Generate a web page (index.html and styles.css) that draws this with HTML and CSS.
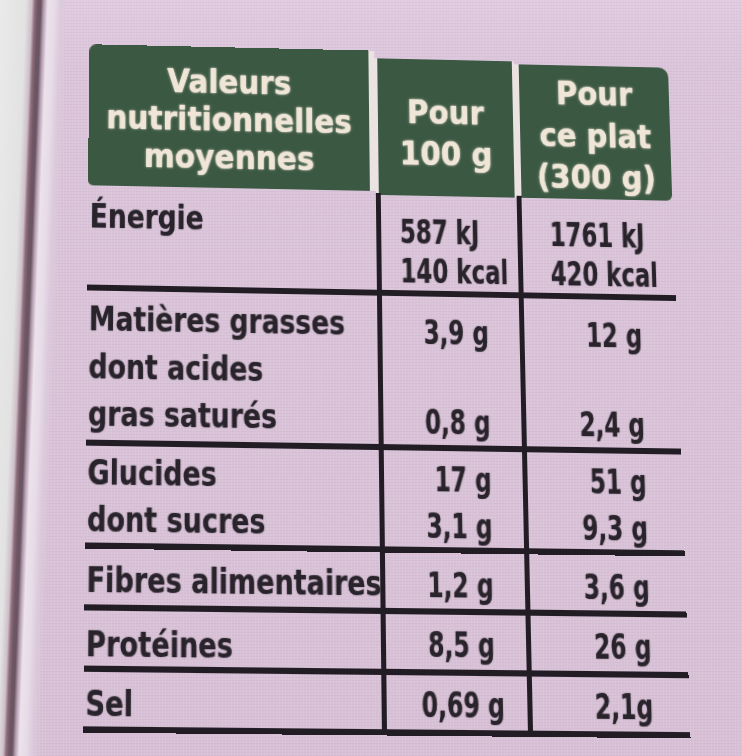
FILE: index.html
```html
<!DOCTYPE html>
<html lang="fr">
<head>
<meta charset="utf-8">
<title>Valeurs nutritionnelles</title>
<link rel="stylesheet" href="styles.css">
</head>
<body>
<div class="page">
  <div class="table">
    <div class="row head">
      <div class="h h1"><div class="htxt">Valeurs<br>nutritionnelles<br>moyennes</div></div>
      <div class="h h2"><div class="htxt">Pour<br>100 g</div></div>
      <div class="h h3"><div class="htxt">Pour<br>ce plat<br>(300 g)</div></div>
    </div>
    <div class="row energy">
      <div class="c name"><div class="lbl">Énergie</div></div>
      <div class="c v v2"><div class="val left">587 kJ<br>140 kcal</div></div>
      <div class="c v v3"><div class="val left">1761 kJ<br>420 kcal</div></div>
    </div>
    <div class="row fat">
      <div class="c name"><div class="lbl">Matières grasses<br>dont acides<br>gras saturés</div></div>
      <div class="c v v2"><div class="val">3,9 g<br><br>0,8 g</div></div>
      <div class="c v v3"><div class="val">12 g<br><br>2,4 g</div></div>
    </div>
    <div class="row carb">
      <div class="c name"><div class="lbl">Glucides<br>dont sucres</div></div>
      <div class="c v v2"><div class="val">17 g<br>3,1 g</div></div>
      <div class="c v v3"><div class="val">51 g<br>9,3 g</div></div>
    </div>
    <div class="row fib">
      <div class="c name"><div class="lbl">Fibres alimentaires</div></div>
      <div class="c v v2"><div class="val">1,2 g</div></div>
      <div class="c v v3"><div class="val">3,6 g</div></div>
    </div>
    <div class="row prot">
      <div class="c name"><div class="lbl">Protéines</div></div>
      <div class="c v v2"><div class="val">8,5 g</div></div>
      <div class="c v v3"><div class="val">26 g</div></div>
    </div>
    <div class="row salt">
      <div class="c name"><div class="lbl">Sel</div></div>
      <div class="c v v2"><div class="val">0,69 g</div></div>
      <div class="c v v3"><div class="val">2,1g</div></div>
    </div>
  </div>
</div>
</body>
</html>
```
FILE: styles.css
```css
* { box-sizing: border-box; }

html, body {
  margin: 0;
  padding: 0;
}

body {
  font-family: "DejaVu Sans", "Liberation Sans", sans-serif;
  font-weight: bold;
  color: #29242b;
}

.page {
  height: 756px;
  overflow: hidden;
  padding: 42px 0 0 88px;
  background:
    linear-gradient(92.2deg,
      #ebeaea 0,
      #e3e2e2 26px,
      #cdbfc8 32px,
      #8e6c7a 35px,
      #6e5664 38px,
      #6a5562 41px,
      #b49db0 44px,
      #ece2ec 48px,
      #e6dbe6 55px,
      #dccadc 61px,
      rgba(218, 195, 216, 0) 68px),
    repeating-linear-gradient(90deg, rgba(255, 255, 255, 0.07) 0 1px, rgba(255, 255, 255, 0) 1px 3px),
    repeating-linear-gradient(0deg, rgba(120, 80, 120, 0.05) 0 1px, rgba(120, 80, 120, 0) 1px 3px),
    linear-gradient(180deg, #e0cbe0 0, #dbc5da 70px, #d8c1d6 100%);
}

.table {
  width: 593px;
  transform: perspective(1000px) rotateX(4deg) rotateY(1.16deg) skewX(0.67deg) skewY(0.85deg);
}

.row {
  display: grid;
  grid-template-columns: 290px 143px 160px;
  border-bottom: 6px solid #221d24;
}

/* header */
.head {
  height: 148px;
  border-bottom: 0;
}

.h {
  background: #3b5843;
  color: #efe6d8;
  font-size: 33px;
  white-space: nowrap;
  text-shadow: 0 0 3px rgba(240, 228, 212, 0.75), 0 0 1px rgba(240, 228, 212, 0.9);
}

.htxt {
  text-align: center;
  transform: scaleX(0.907);
  transform-origin: 50% 0;
}

.h1 {
  border-right: 6px solid #ebe2e2;
  border-radius: 7px 0 0 5px;
  margin-bottom: 4px;
  padding-top: 16.5px;
  line-height: 39.3px;
}

.h2 {
  margin-top: 7.5px;
  border-left: 3px solid #ebe2e2;
  border-right: 2px solid #ebe2e2;
  padding-top: 34.5px;
  line-height: 43.4px;
}

.h3 {
  margin-top: 10.5px;
  margin-right: 1px;
  border-left: 5px solid #ebe2e2;
  border-radius: 0 10px 6px 0;
  padding-top: 8.5px;
  line-height: 43.5px;
}

/* body cells */
.c {
  font-size: 34px;
  white-space: nowrap;
  text-shadow: 0 0 1.5px rgba(35, 28, 38, 0.6);
}

.name {
  padding-left: 2px;
  line-height: 47px;
}

.lbl {
  transform: scaleX(0.78);
  transform-origin: 0 0;
}

.v {
  border-left: 5px solid #221d24;
  line-height: 46px;
}

.v2 { padding-right: 31px; }
.v3 { padding-right: 36px; }

.val {
  text-align: right;
  transform: scaleX(0.68);
  transform-origin: 100% 0;
}

.val.left {
  text-align: left;
  transform-origin: 0 0;
}

.energy { height: 105px; }
.energy .name { padding-top: 6px; }
.energy .v { padding-top: 19px; line-height: 40px; }
.energy .v2 { padding-left: 19px; }
.energy .v3 { padding-left: 28px; }

.fat { height: 155px; }
.fat .name { padding-top: 5px; line-height: 47.5px; }
.fat .v { padding-top: 13.5px; line-height: 45px; }

.carb { height: 101px; }
.carb .name { padding-top: 2.5px; line-height: 46px; }
.carb .v { padding-top: 4.5px; }

.fib { height: 60px; }
.fib .name { padding-top: 7px; }
.fib .v { padding-top: 7.5px; }

.prot { height: 59px; }
.prot .name { padding-top: 8.5px; }
.prot .v { padding-top: 6px; }

.salt { height: 58px; }
.salt .name { padding-top: 7px; }
.salt .v { padding-top: 4.5px; }
```
